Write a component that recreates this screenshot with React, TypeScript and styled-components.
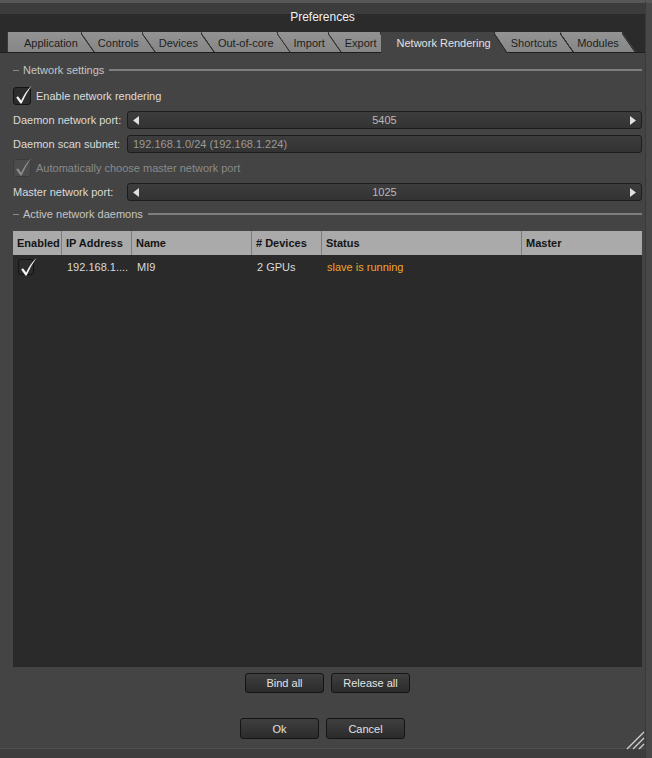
import React from "react";
import styled, { createGlobalStyle } from "styled-components";

const GlobalStyle = createGlobalStyle`
  html, body {
    margin: 0;
    padding: 0;
    background: #3f3f3f;
  }
  body {
    font-family: "Liberation Sans", Arial, sans-serif;
    font-size: 11px;
    color: #d8d8d8;
  }
  * { box-sizing: border-box; }
`;

const Window = styled.div`
  position: relative;
  width: 652px;
  height: 758px;
  display: flex;
  background: #444444;
  overflow: hidden;
`;

const Main = styled.div`
  flex: 1;
  display: flex;
  flex-direction: column;
  min-width: 0;
`;

const RightEdge = styled.div`
  width: 7px;
  background: #484848;
  border-left: 1px solid #3a3a3a;
  border-top: 3px solid #575757;
`;

const TitleBar = styled.div`
  height: 32px;
  display: flex;
  justify-content: center;
  padding-top: 10px;
  font-size: 12px;
  color: #f2f2f2;
  background: linear-gradient(
    #575757 0, #575757 3px,
    #3c3c3c 3px, #3c3c3c 14px,
    #2b2b2b 14px, #2b2b2b 100%
  );
`;

const TabBar = styled.div`
  height: 21px;
  display: flex;
  align-items: flex-start;
  padding-left: 7px;
  background: linear-gradient(#2b2b2b 0, #2b2b2b 20px, #1e1e1e 20px);
`;

const Tab = styled.div<{ $active?: boolean; $order: number }>`
  position: relative;
  z-index: ${(p) => (p.$active ? 50 : 20 - p.$order)};
  height: ${(p) => (p.$active ? 21 : 20)}px;
  line-height: 22px;
  padding: 0 17px 0 16px;
  margin-right: -13px;
  white-space: nowrap;
  font-size: 11px;
  color: ${(p) => (p.$active ? "#e2e2e2" : "#1e1e1e")};
  background: ${(p) =>
    p.$active ? "#444444" : "linear-gradient(#939393, #868686)"};
  border-left: ${(p) => (p.$order === 0 ? "1px solid #3a3a3a" : "none")};
  clip-path: polygon(0 0, calc(100% - 14px) 0, 100% 100%, 0 100%);

  &::after {
    content: "";
    position: absolute;
    top: 0;
    right: 0;
    width: 14px;
    height: 100%;
    background: linear-gradient(
      to top right,
      transparent calc(50% - 1.6px),
      #2e2e2e calc(50% - 1px),
      #2e2e2e 50%,
      transparent 50%
    );
  }
`;

const Page = styled.div`
  flex: 1;
  display: flex;
  flex-direction: column;
  padding: 0 3px 9px 13px;
  min-height: 0;
`;

const GroupHeader = styled.div<{ $top: number }>`
  margin-top: ${(p) => p.$top}px;
  height: 16px;
  display: flex;
  align-items: center;
  color: #c4c4c4;

  &::before {
    content: "";
    width: 6px;
    height: 1px;
    margin-right: 4px;
    background: #8a8a8a;
  }

  &::after {
    content: "";
    flex: 1;
    height: 2px;
    margin-left: 5px;
    background: #7e7e7e;
  }
`;

const CheckRow = styled.label<{ $top: number; $disabled?: boolean }>`
  margin-top: ${(p) => p.$top}px;
  height: 18px;
  display: flex;
  align-items: center;
  gap: 5px;
  color: ${(p) => (p.$disabled ? "#8a8a8a" : "#dcdcdc")};
`;

const Box = styled.span<{ $size: number; $disabled?: boolean }>`
  position: relative;
  width: ${(p) => p.$size}px;
  height: ${(p) => p.$size}px;
  flex: none;
  border-radius: 3px;
  border: 1px solid ${(p) => (p.$disabled ? "#3c3c3c" : "#141414")};
  background: ${(p) => (p.$disabled ? "#4c4c4c" : "#2c2c2c")};

  svg {
    position: absolute;
    left: 0;
    top: 0;
    overflow: visible;
  }
`;

const FieldRow = styled.div`
  margin-top: 6px;
  height: 18px;
  display: flex;
  align-items: center;
`;

const FieldLabel = styled.span`
  width: 114px;
  flex: none;
  color: #dadada;
`;

const Field = styled.div<{ $align: "left" | "center" }>`
  flex: 1;
  height: 18px;
  display: flex;
  align-items: center;
  justify-content: ${(p) => (p.$align === "center" ? "space-between" : "flex-start")};
  padding: 0 5px;
  border: 1px solid #1c1c1c;
  border-radius: 3px;
  background: linear-gradient(#3d3d3d, #333333);
  color: ${(p) => (p.$align === "center" ? "#b8b8b8" : "#9a9a9a")};
`;

const FieldValue = styled.span`
  flex: 1;
  text-align: center;
`;

const Table = styled.div`
  margin-top: 9px;
  flex: 1;
  display: flex;
  flex-direction: column;
  background: #2a2a2a;
  min-height: 0;
`;

const COLS = "49px 70px 120px 70px 200px 1fr";

const HeaderRow = styled.div`
  display: grid;
  grid-template-columns: ${COLS};
  height: 24px;
  background: #aaaaaa;
`;

const HeaderCell = styled.div`
  display: flex;
  align-items: center;
  padding-left: 4px;
  font-weight: bold;
  color: #141414;
  border-right: 1px solid #7c7c7c;

  &:last-child {
    border-right: none;
  }
`;

const DataRow = styled.div`
  display: grid;
  grid-template-columns: ${COLS};
  height: 24px;
`;

const DataCell = styled.div<{ $color?: string }>`
  display: flex;
  align-items: center;
  padding-left: 5px;
  color: ${(p) => p.$color || "#dadada"};
  white-space: nowrap;
  overflow: hidden;
`;

const ButtonRow = styled.div<{ $top: number; $shift: number }>`
  margin-top: ${(p) => p.$top}px;
  display: flex;
  justify-content: center;
  gap: 7px;
  padding-right: ${(p) => p.$shift}px;
`;

const Button = styled.button<{ $h: number }>`
  width: 79px;
  height: ${(p) => p.$h}px;
  padding: 0;
  border: 1px solid #141414;
  border-radius: 3px;
  background: linear-gradient(#3f3f3f, #2b2b2b);
  color: #e2e2e2;
  font-family: "Liberation Sans", Arial, sans-serif;
  font-size: 11px;
`;

const BottomEdge = styled.div`
  height: 10px;
  background: #3d3d3d;
  border-top: 1px solid #4e4e4e;
`;

const Grip = styled.svg`
  position: absolute;
  right: 7px;
  bottom: 8px;
`;

const Check = ({ color }: { color: string }) => (
  <svg width="18" height="18" viewBox="0 0 18 18">
    <path
      d="M2.2 9.4 L4 8.2 L7.2 12.6 Q11 4 17.4 -2 Q12 5.5 7.6 15.6 L6.4 15.6 Z"
      fill={color}
    />
  </svg>
);

const CheckBox = ({ size, disabled }: { size: number; disabled?: boolean }) => (
  <Box $size={size} $disabled={disabled}>
    <Check color={disabled ? "#8c8c8c" : "#f4f4f4"} />
  </Box>
);

const Arrow = ({ dir }: { dir: "left" | "right" }) => (
  <svg width="6" height="9" viewBox="0 0 6 9">
    <polygon
      points={dir === "left" ? "6,0 6,9 0,4.5" : "0,0 0,9 6,4.5"}
      fill="#e0e0e0"
    />
  </svg>
);

const Spinner = ({ value }: { value: string }) => (
  <Field $align="center">
    <Arrow dir="left" />
    <FieldValue>{value}</FieldValue>
    <Arrow dir="right" />
  </Field>
);

const TABS = [
  "Application",
  "Controls",
  "Devices",
  "Out-of-core",
  "Import",
  "Export",
  "Network Rendering",
  "Shortcuts",
  "Modules",
];

const HEADERS = ["Enabled", "IP Address", "Name", "# Devices", "Status", "Master"];

export default function App() {
  return (
    <>
      <GlobalStyle />
      <Window>
        <Main>
          <TitleBar>Preferences</TitleBar>
          <TabBar>
            {TABS.map((t, i) => (
              <Tab key={t} $order={i} $active={t === "Network Rendering"}>
                {t}
              </Tab>
            ))}
          </TabBar>
          <Page>
            <GroupHeader $top={9}>Network settings</GroupHeader>
            <CheckRow $top={9}>
              <CheckBox size={18} />
              Enable network rendering
            </CheckRow>
            <FieldRow>
              <FieldLabel>Daemon network port:</FieldLabel>
              <Spinner value="5405" />
            </FieldRow>
            <FieldRow>
              <FieldLabel>Daemon scan subnet:</FieldLabel>
              <Field $align="left">192.168.1.0/24 (192.168.1.224)</Field>
            </FieldRow>
            <CheckRow $top={6} $disabled>
              <CheckBox size={18} disabled />
              Automatically choose master network port
            </CheckRow>
            <FieldRow>
              <FieldLabel>Master network port:</FieldLabel>
              <Spinner value="1025" />
            </FieldRow>
            <GroupHeader $top={5}>Active network daemons</GroupHeader>
            <Table>
              <HeaderRow>
                {HEADERS.map((h) => (
                  <HeaderCell key={h}>{h}</HeaderCell>
                ))}
              </HeaderRow>
              <DataRow>
                <DataCell>
                  <CheckBox size={16} />
                </DataCell>
                <DataCell>192.168.1....</DataCell>
                <DataCell>MI9</DataCell>
                <DataCell>2 GPUs</DataCell>
                <DataCell $color="#f0a42a">slave is running</DataCell>
                <DataCell />
              </DataRow>
            </Table>
            <ButtonRow $top={6} $shift={0}>
              <Button $h={20}>Bind all</Button>
              <Button $h={20}>Release all</Button>
            </ButtonRow>
            <ButtonRow $top={25} $shift={10}>
              <Button $h={21}>Ok</Button>
              <Button $h={21}>Cancel</Button>
            </ButtonRow>
          </Page>
          <BottomEdge />
        </Main>
        <RightEdge />
        <Grip width="20" height="20" viewBox="0 0 20 20">
          <g stroke="#d0d0d0" strokeWidth="1.2">
            <line x1="2" y1="19" x2="19" y2="2" />
            <line x1="8" y1="19" x2="19" y2="8" />
            <line x1="14" y1="19" x2="19" y2="14" />
          </g>
        </Grip>
      </Window>
    </>
  );
}
